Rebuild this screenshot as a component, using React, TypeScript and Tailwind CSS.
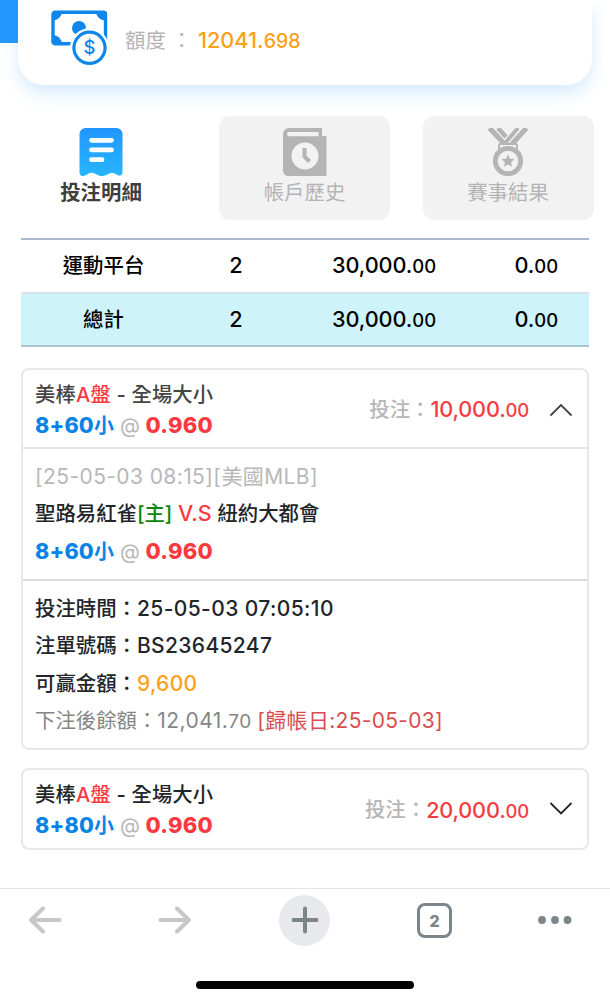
import type { ReactNode } from "react";

function MoneyIcon() {
  return (
    <svg width="58" height="58" viewBox="0 0 58 58" fill="none">
      <rect x="2" y="2.3" width="52.5" height="31.4" rx="2" stroke="#0f87ea" strokeWidth="3.4" />
      <g fill="#0f87ea">
        <path d="M2 2h9a9 9 0 0 1-9 8.500z" />
        <path d="M54 2h-9a9 9 0 0 0 9 8.500z" />
        <path d="M2 34v-9a9 9 0 0 1 9 9z" />
        <circle cx="28" cy="18" r="7" />
      </g>
      <circle cx="38.500" cy="37.800" r="19.500" fill="#fff" />
      <circle cx="38.500" cy="37.800" r="15.600" fill="#fff" stroke="#0f87ea" strokeWidth="3.200" />
      <text x="38.500" y="44.300" textAnchor="middle" fontSize="18.500" fontWeight="500" fill="#0f87ea" className="font-['Inter',sans-serif]">$</text>
    </svg>
  );
}

function ReceiptIcon() {
  return (
    <svg width="44" height="48" viewBox="0 0 44 48">
      <defs>
        <linearGradient id="receipt" x1="0" y1="0" x2="0" y2="1">
          <stop offset="0" stopColor="#2296ff" />
          <stop offset="1" stopColor="#27b5ff" />
        </linearGradient>
      </defs>
      <path d="M6.500 0h31a6 6 0 0 1 6 6v38.500c0 3-3 4-5 2.500l-3-1.500c-1.700-1-3.300-1-5 0l-4 1.800c-2 1-5 1-7 0l-4-1.800c-2-1-4-1-6 0l-3 1.700c-3 1.800-6 .5-6-2.700V6a6 6 0 0 1 6-6z" fill="url(#receipt)" />
      <path d="M12.500 12.300h20M12.500 21.900h20M12.500 31.700h10.500" stroke="#fff" strokeWidth="4.800" strokeLinecap="round" />
    </svg>
  );
}

function HistoryIcon() {
  return (
    <svg width="44" height="48" viewBox="0 0 44 48">
      <path d="M6 0h33v8h4.500v40H5.500A5.500 5.500 0 0 1 0 42.500V6a6 6 0 0 1 6-6z" fill="#b4b4b4" />
      <path d="M6 4h29.500v4.200H6a2.100 2.100 0 0 1 0-4.200z" fill="#f2f2f2" />
      <circle cx="22" cy="28" r="13.500" fill="#f2f2f2" />
      <path d="M21.500 20v8.500l5 5" fill="none" stroke="#b4b4b4" strokeWidth="4" strokeLinejoin="round" />
    </svg>
  );
}

function MedalIcon() {
  return (
    <svg width="44" height="48" viewBox="0 0 44 48" fill="none">
      <g stroke="#b4b4b4">
        <path d="M3.500 0l14 15" strokeWidth="5" />
        <path d="M12 0l8 9" strokeWidth="4.500" />
        <path d="M32 0L17.500 17" strokeWidth="4" />
        <path d="M40.500 0L26 16" strokeWidth="5" />
        <rect x="13" y="16" width="18" height="6" rx="1.500" strokeWidth="2" fill="#f2f2f2" />
        <circle cx="22" cy="33" r="12.700" strokeWidth="4.800" fill="#f2f2f2" />
      </g>
      <path d="M22 26.500l1.900 4.200 4.600.5-3.400 3.100.9 4.500-4-2.300-4 2.300.9-4.500-3.400-3.100 4.600-.5z" fill="#b4b4b4" />
    </svg>
  );
}

function Tab({ icon, label, active = false }: { icon: ReactNode; label: string; active?: boolean }) {
  return (
    <div className={`flex h-[104px] w-[171px] flex-col items-center rounded-[11px] pt-3 ${active ? "font-bold text-[#3e3e3e]" : "bg-[#f2f2f2] text-[#b4b4b4]"}`}>
      {icon}
      <div className="mt-[2px] text-[20.400px] leading-[30px]">{label}</div>
    </div>
  );
}

function Row({ name, total = false }: { name: string; total?: boolean }) {
  return (
    <div className={`flex h-[53.500px] items-center border-b-2 text-[21.700px] font-medium text-black ${total ? "border-[#a9c6d2] bg-[#cff3fb]" : "border-[#d3e5ea]"}`}>
      <div className="w-[165px] pt-[2px] text-center text-[20.400px]">{name}</div>
      <div className="w-[100px] text-center">2</div>
      <div className="w-[150px] text-right tracking-[-0.100px]">30,000.<span className="text-[18.500px]">00</span></div>
      <div className="w-[122px] text-right tracking-[-0.100px]">0.<span className="text-[18.500px]">00</span></div>
    </div>
  );
}

function Pick({ value }: { value: string }) {
  return (
    <>
      <span className="text-[21.500px] font-extrabold tracking-[0.200px] text-[#0a83e6]">{value}<span className="text-[20px] font-bold">小</span></span>
      <span className="text-[20.500px] font-normal text-[#b8b8b8]"> @ </span>
      <span className="text-[22px] font-extrabold tracking-[0.250px] text-[#fa3a40]">0.960</span>
    </>
  );
}

function BetHeader({ value, amount, open = false }: { value: string; amount: string; open?: boolean }) {
  return (
    <div className="flex h-[77px] items-center justify-between pr-[14px] pl-3">
      <div className={`text-[20.300px] leading-[30px] ${open ? "text-[#444]" : "text-[#222529]"}`}>
        <div className="mt-[3px] h-[30px] font-medium tracking-[0.150px]">美棒<span className="text-[#fa3a40]">A盤</span> - 全場大小</div>
        <div className="h-[30px]"><Pick value={value} /></div>
      </div>
      <div className="mt-[3px] flex items-center">
        <span className="text-[20.400px] font-medium text-[#b6b6b6]">投注：</span>
        <span className="text-[21.700px] font-medium tracking-[-0.200px] text-[#f43d43]">{amount}.<span className="text-[18.500px]">00</span></span>
        <svg width="24" height="16" viewBox="0 0 24 16" className="ml-5" fill="none" stroke={open ? "#444" : "#222529"} strokeWidth="1.800">
          <path d={open ? "M1.500 13.500 12 3 22.500 13.500" : "M1.500 1 12 11.500 22.500 1"} />
        </svg>
      </div>
    </div>
  );
}

function Line({ className = "", children }: { className?: string; children: ReactNode }) {
  return <div className={`h-[37.300px] ${className}`}>{children}</div>;
}

export default function App() {
  return (
    <div className="flex h-[1000px] w-[610px] flex-col overflow-hidden bg-white font-['Inter','Noto_Sans_CJK_TC',sans-serif] whitespace-pre">
      <header className="flex h-[116px] shrink-0 items-start">
        <div className="relative h-[43px] w-[18px] bg-[#2397fd]" />
        <div className="flex h-[85px] w-[574px] items-start rounded-b-[26px] bg-white pt-[10px] pl-[33px] shadow-[0_9px_18px_0_#d8ebfc]">
          <MoneyIcon />
          <div className="mt-[15px] ml-4 flex items-baseline text-[20.400px] leading-[30px] text-[#b4b4b4]">
            <span className="w-[73px]">額度 ：</span>
            <span className="text-[21.700px] font-medium text-[#faa019]">12041.<span className="text-[19.500px]">698</span></span>
          </div>
        </div>
      </header>

      <nav className="flex shrink-0 gap-[32.500px] pl-[15.500px]">
        <Tab icon={<ReceiptIcon />} label="投注明細" active />
        <Tab icon={<HistoryIcon />} label="帳戶歷史" />
        <Tab icon={<MedalIcon />} label="賽事結果" />
      </nav>

      <section className="mx-[21px] mt-[18px] shrink-0 border-t-2 border-[#a9b9d2]">
        <Row name="運動平台" />
        <Row name="總計" total />
      </section>

      <section className="mx-[21px] mt-[21px] flex h-[382px] shrink-0 flex-col rounded-lg border-2 border-[#e8e8e8] text-[20.400px] leading-[37.300px] font-medium text-[#222529]">
        <BetHeader value="8+60" amount="10,000" open />
        <div className="h-[132px] shrink-0 border-t-2 border-[#e6e6e6] pt-[9px] pl-3">
          <Line className="text-[21px] font-normal tracking-[0.400px] text-[#b8b8b8]">[25-05-03 08:15][美國MLB]</Line>
          <Line>聖路易紅雀<span className="text-[#0b870b]">[主]</span><span className="text-[21.500px] text-[#fa3a40]"> V.S </span>紐約大都會</Line>
          <Line><Pick value="8+60" /></Line>
        </div>
        <div className="border-t-2 border-[#dcdcdc] pt-[9px] pl-3">
          <Line>投注時間：<span className="text-[21px] tracking-[0.400px]">25-05-03 07:05:10</span></Line>
          <Line>注單號碼：<span className="text-[21px] tracking-[0.350px]">BS23645247</span></Line>
          <Line>可贏金額：<span className="text-[21px] tracking-[0.350px] text-[#faa019]">9,600</span></Line>
          <Line className="font-normal text-[#858585]">下注後餘額：<span className="text-[21px] tracking-[0.450px]">12,041.</span><span className="text-[19px] tracking-[0.400px]">70</span> <span className="text-[21px] tracking-[0.300px] text-[#d94d50]">[歸帳日:25-05-03]</span></Line>
        </div>
      </section>

      <section className="mx-[21px] mt-[18px] h-[82px] shrink-0 rounded-lg border-2 border-[#e8e8e8]">
        <BetHeader value="8+80" amount="20,000" />
      </section>

      <footer className="mt-[38px] flex grow flex-col items-center border-t border-[#e3e3e3]">
        <div className="flex h-[62px] w-full items-center pl-7 text-[#7c8589]">
          <svg width="34" height="28" viewBox="0 0 34 28" fill="none" stroke="#c7c7c7" strokeWidth="4" strokeLinecap="round" strokeLinejoin="round"><path d="M31.500 14H3M15 2.500 3 14l12 11.500" /></svg>
          <svg className="ml-24" width="34" height="28" viewBox="0 0 34 28" fill="none" stroke="#c7c7c7" strokeWidth="4" strokeLinecap="round" strokeLinejoin="round"><path d="M2.500 14H31M19 2.500 31 14 19 25.500" /></svg>
          <div className="ml-[87px] flex size-[51px] items-center justify-center rounded-full bg-[#e8e9ed]">
            <svg width="28" height="28" viewBox="0 0 28 28" stroke="#7c8589" strokeWidth="4" strokeLinecap="round"><path d="M14 2.500v23M2.500 14h23" /></svg>
          </div>
          <div className="ml-[87px] flex size-[35px] items-center justify-center rounded-[8px] border-[3.500px] border-[#7c8589] pt-px text-[16px] font-extrabold">2</div>
          <svg className="ml-[86px]" width="34" height="8" viewBox="0 0 34 8" fill="#7c8589"><circle cx="4" cy="4" r="3.900" /><circle cx="17" cy="4" r="3.900" /><circle cx="29.500" cy="4" r="3.900" /></svg>
        </div>
        <div className="mt-[30px] h-2 w-[218px] rounded-full bg-black" />
      </footer>
    </div>
  );
}
